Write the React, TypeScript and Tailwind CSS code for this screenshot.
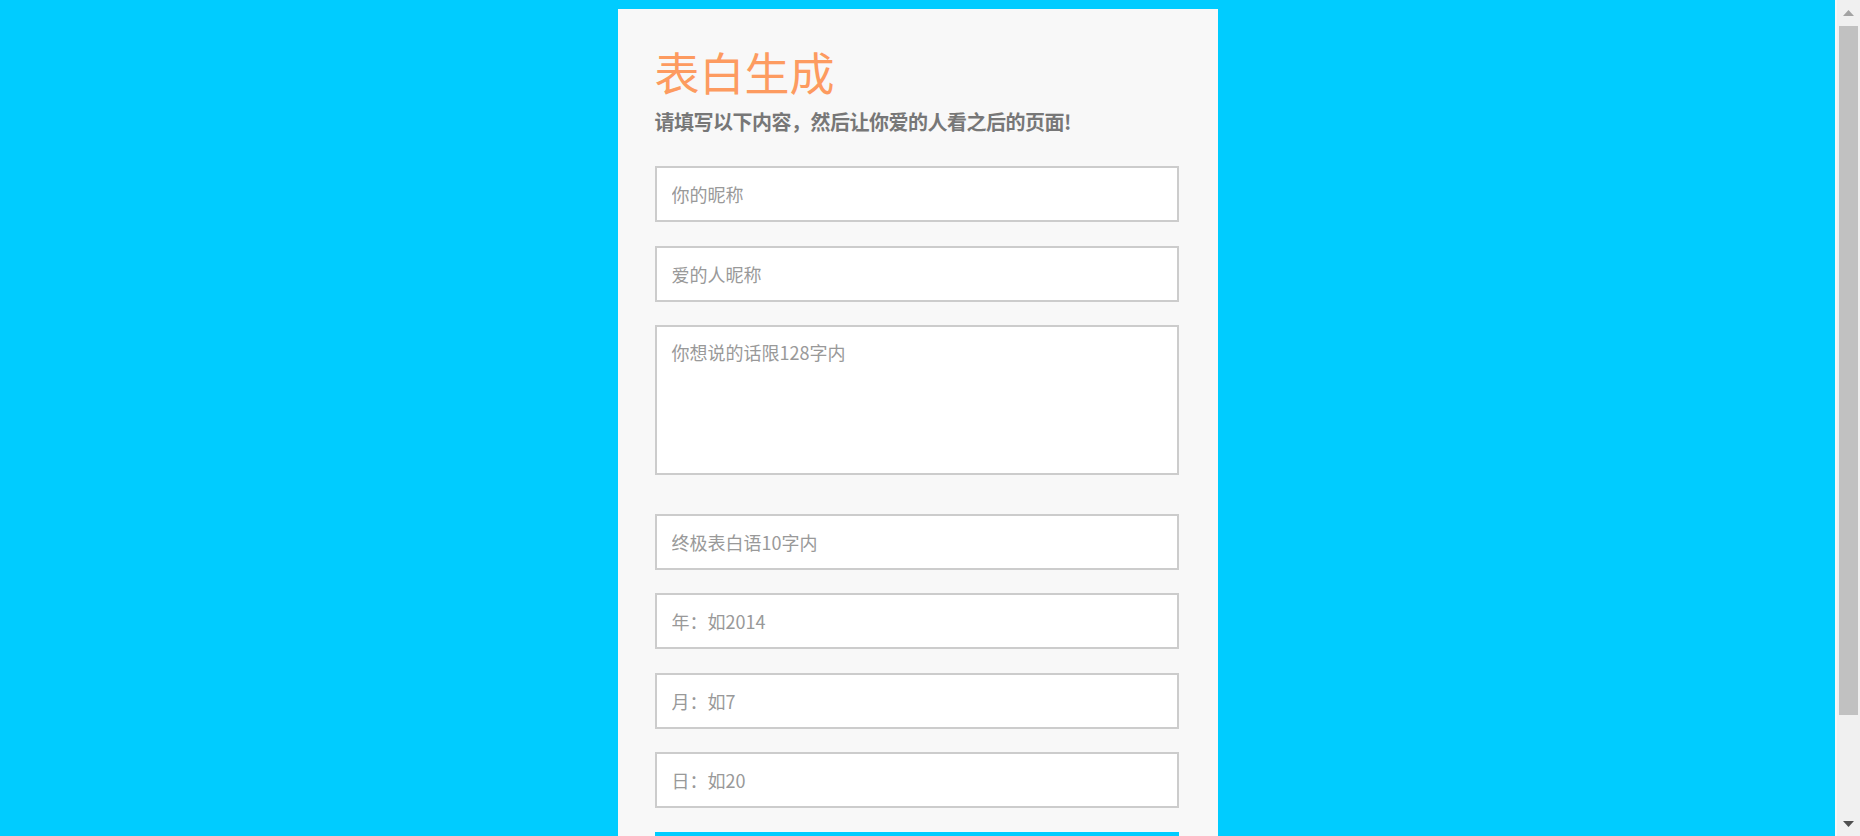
import React from "react";

const font = { fontFamily: '"Noto Sans CJK SC", "Noto Sans", sans-serif' };

function Field({ ph }: { ph: string }) {
  return (
    <input
      placeholder={ph}
      className="block w-full h-[56px] border-2 border-[#cccccc] bg-white px-[15px] text-[18px] text-[#555] placeholder:text-[#999999] outline-none mb-[23.5px]"
      style={font}
    />
  );
}

export default function App() {
  return (
    <div className="flex h-[836px] w-full overflow-hidden bg-[#00ccff]" style={font}>
      <div className="flex-1 flex justify-center">
        <div className="w-[600px] mt-[9px] bg-[#f8f8f8] pl-[37px] pr-[39px] pt-[35px] h-[900px]">
          <h1 className="text-[45px] leading-[56px] text-[#fd9b60] font-normal">表白生成</h1>
          <p className="text-[20px] leading-[28px] font-bold text-[#777777] mt-[8px] mb-[30px] tracking-[-0.5px]">
            请填写以下内容，然后让你爱的人看之后的页面!
          </p>
          <Field ph="你的昵称" />
          <Field ph="爱的人昵称" />
          <textarea
            placeholder="你想说的话限128字内"
            className="block w-full h-[150px] border-2 border-[#cccccc] bg-white px-[15px] pt-[12px] text-[18px] leading-[26px] placeholder:text-[#999999] outline-none resize-none mb-[38.5px]"
            style={font}
          />
          <Field ph="终极表白语10字内" />
          <Field ph="年：如2014" />
          <Field ph="月：如7" />
          <Field ph="日：如20" />
          <div className="h-[56px] w-full bg-[#00ccff]" />
        </div>
      </div>
      <div className="w-[25px] flex flex-col bg-[#f0f0f0] border-l-2 border-[#f7f7f7]">
        <div className="h-[26px] flex items-center justify-center">
          <svg width="11" height="6" viewBox="0 0 11 6"><path d="M0 6 L5.5 0 L11 6 Z" fill="#a3a3a3" /></svg>
        </div>
        <div className="h-[689px] mx-[2px] bg-[#c1c1c1]" />
        <div className="flex-1" />
        <div className="h-[24px] flex items-center justify-center">
          <svg width="11" height="6" viewBox="0 0 11 6"><path d="M0 0 L11 0 L5.5 6 Z" fill="#505050" /></svg>
        </div>
      </div>
    </div>
  );
}
